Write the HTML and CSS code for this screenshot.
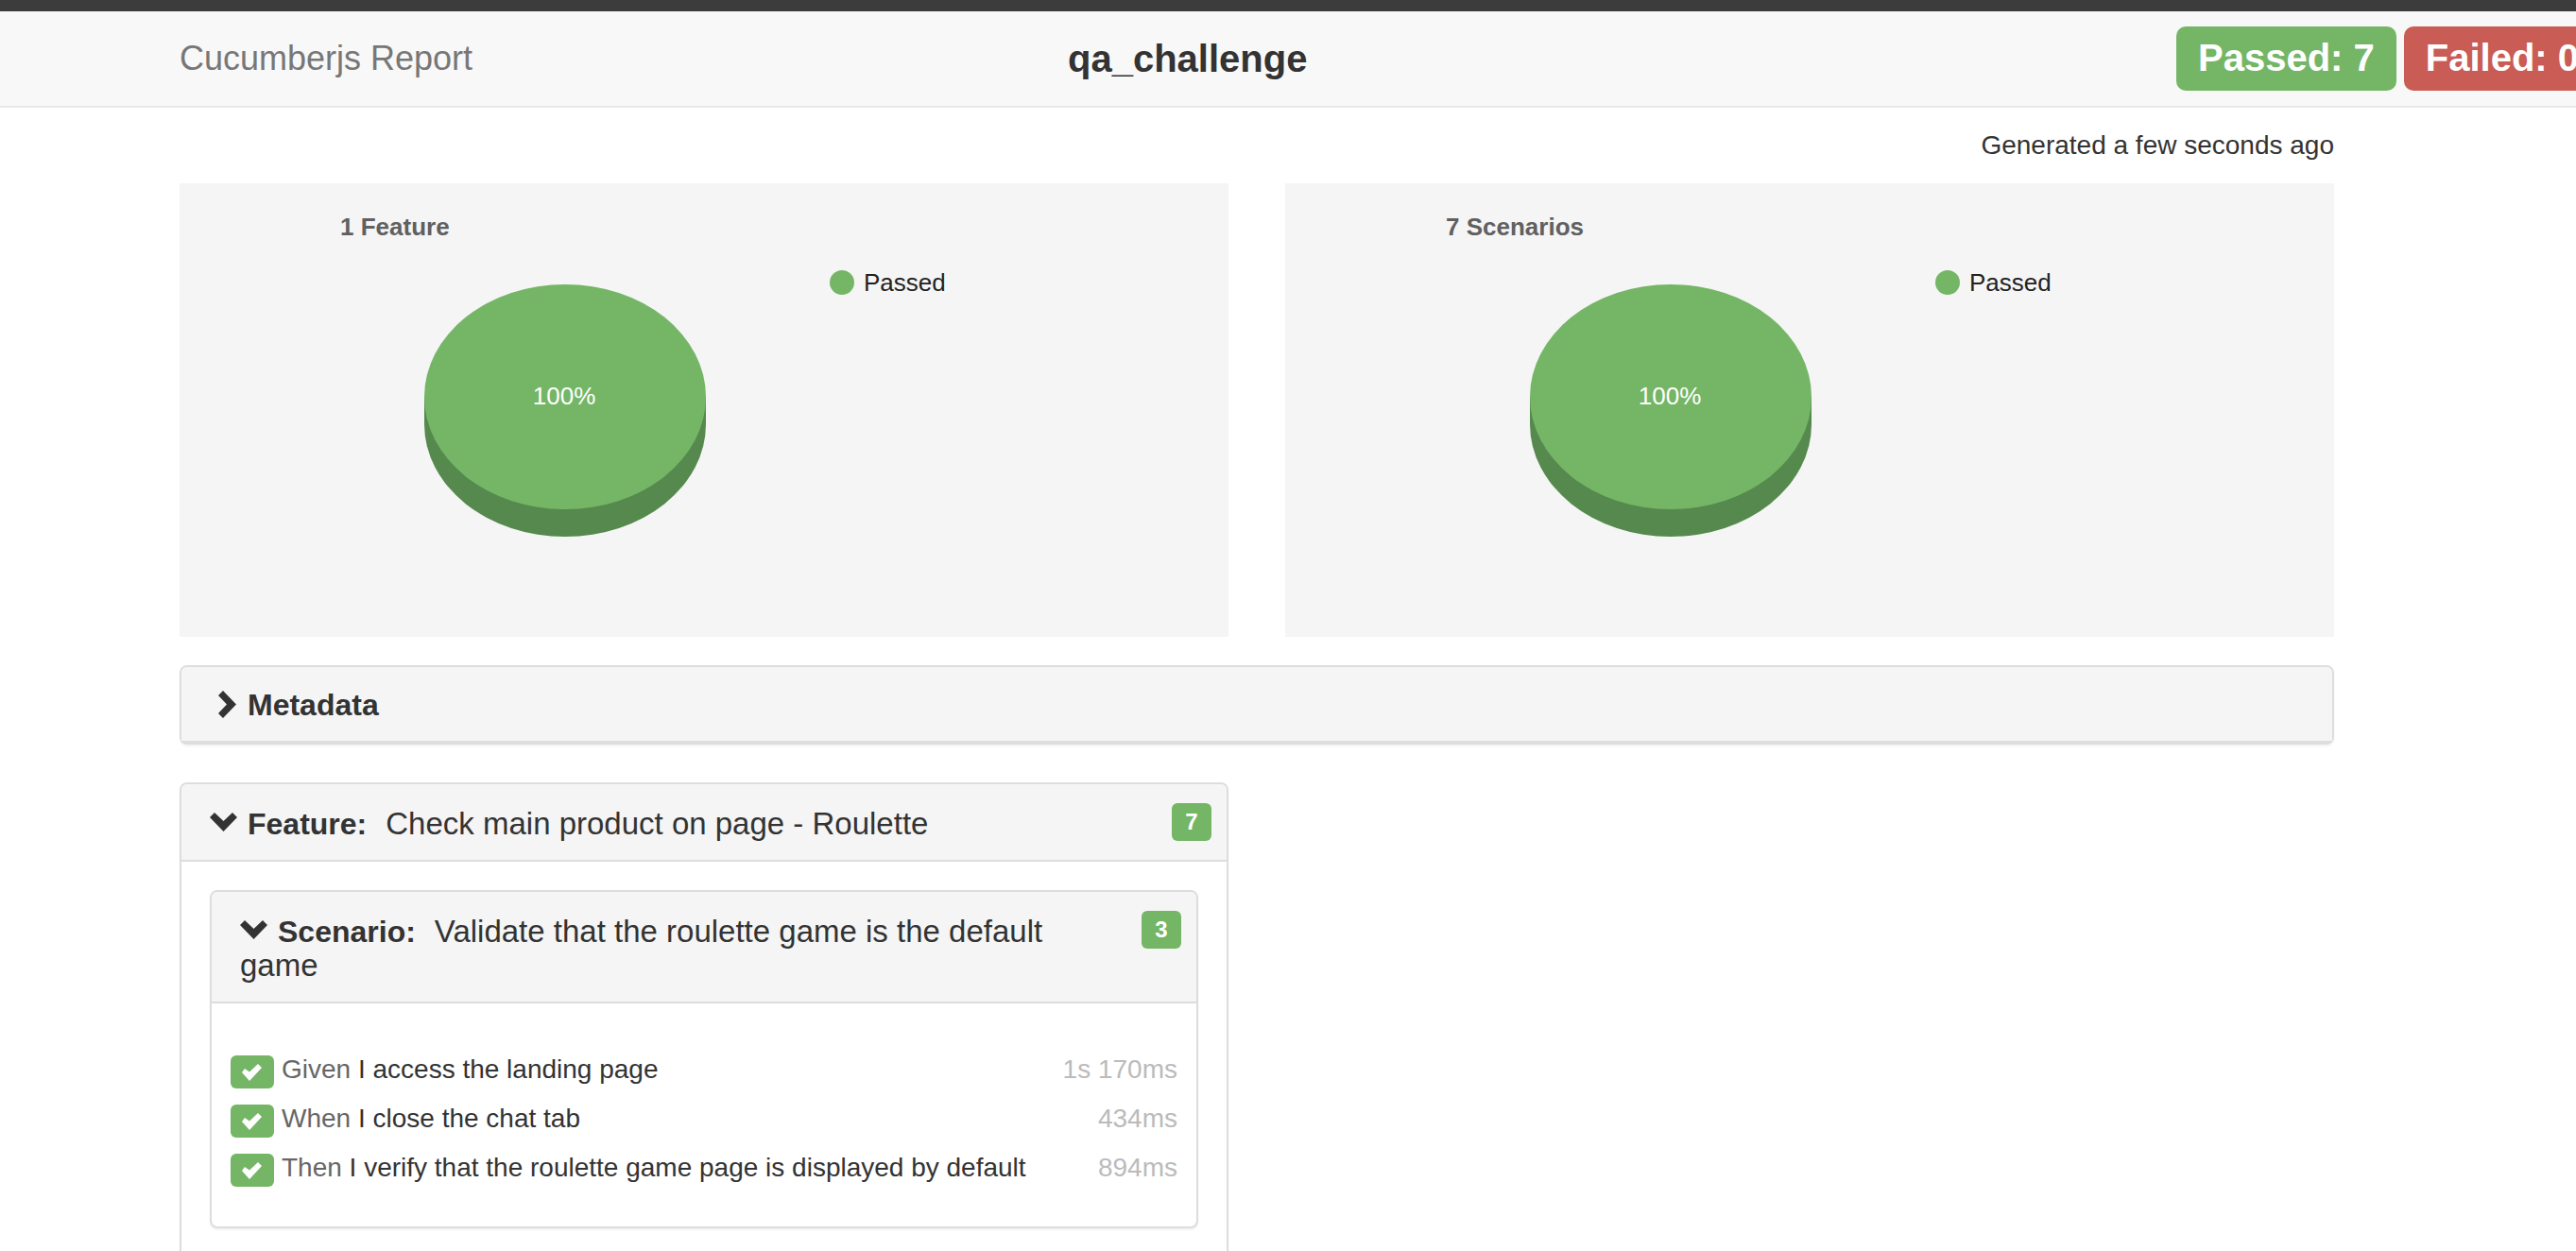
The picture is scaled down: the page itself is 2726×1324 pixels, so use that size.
FILE: index.html
```html
<!DOCTYPE html>
<html lang="en">
<head>
<meta charset="utf-8">
<title>Cucumberjs Report</title>
<link rel="stylesheet" href="styles.css">
</head>
<body>
<header class="navbar">
  <a class="brand" href="#">Cucumberjs Report</a>
  <h1 class="project">qa_challenge</h1>
  <div class="totals">
    <span class="total passed">Passed: 7</span>
    <span class="total failed">Failed: 0</span>
  </div>
</header>
<main class="container">
  <p class="generated">Generated a few seconds ago</p>
  <div class="columns charts">
    <svg class="chart" role="img" aria-label="1 Feature, 100% passed">
      <text class="chart-title" x="170" y="55">1 Feature</text>
      <path class="pie-side" d="M259 226v29a149 119 0 0 0 298 0v-29z"/>
      <ellipse class="pie-top" cx="408" cy="226" rx="149" ry="119"/>
      <text class="pie-value" x="407" y="234">100%</text>
      <circle class="pie-top" cx="701" cy="105" r="13"/>
      <text class="legend" x="724" y="114">Passed</text>
    </svg>
    <svg class="chart" role="img" aria-label="7 Scenarios, 100% passed">
      <text class="chart-title" x="170" y="55">7 Scenarios</text>
      <path class="pie-side" d="M259 226v29a149 119 0 0 0 298 0v-29z"/>
      <ellipse class="pie-top" cx="408" cy="226" rx="149" ry="119"/>
      <text class="pie-value" x="407" y="234">100%</text>
      <circle class="pie-top" cx="701" cy="105" r="13"/>
      <text class="legend" x="724" y="114">Passed</text>
    </svg>
  </div>

  <section class="panel metadata">
    <h2 class="panel-heading">
      <button class="toggle" type="button" aria-expanded="false"><svg class="chevron" viewBox="0 0 32 30" aria-hidden="true"><path d="M14 1 28 15.500 14 30 9 25 18 15.500 9 6z"/></svg><b>Metadata</b></button>
    </h2>
  </section>

  <div class="columns">
    <section class="panel">
      <h2 class="panel-heading">
        <button class="toggle" type="button" aria-expanded="true"><svg class="chevron" viewBox="0 0 32 30" aria-hidden="true"><path d="M0 9 5 4 14.500 13 24 4 29 9 14.500 24z"/></svg><b>Feature:</b><span class="name">Check main product on page - Roulette</span></button>
        <span class="badge">7</span>
      </h2>
      <div class="feature-body">
        <section class="panel">
          <h3 class="panel-heading">
            <button class="toggle" type="button" aria-expanded="true"><svg class="chevron" viewBox="0 0 32 30" aria-hidden="true"><path d="M0 9 5 4 14.500 13 24 4 29 9 14.500 24z"/></svg><b>Scenario:</b><span class="name">Validate that the roulette game is the default game</span></button>
            <span class="badge">3</span>
          </h3>
          <ul class="steps">
            <li class="step">
              <span class="status"><svg class="check" viewBox="0 0 22 18" aria-hidden="true"><path d="M0 9 3 5 8 8.500 17 0 21 4 8 18z"/></svg></span>
              <span class="text"><span class="keyword">Given</span> I access the landing page</span>
              <span class="duration">1s 170ms</span>
            </li>
            <li class="step">
              <span class="status"><svg class="check" viewBox="0 0 22 18" aria-hidden="true"><path d="M0 9 3 5 8 8.500 17 0 21 4 8 18z"/></svg></span>
              <span class="text"><span class="keyword">When</span> I close the chat tab</span>
              <span class="duration">434ms</span>
            </li>
            <li class="step">
              <span class="status"><svg class="check" viewBox="0 0 22 18" aria-hidden="true"><path d="M0 9 3 5 8 8.500 17 0 21 4 8 18z"/></svg></span>
              <span class="text"><span class="keyword">Then</span> I verify that the roulette game page is displayed by default</span>
              <span class="duration">894ms</span>
            </li>
          </ul>
        </section>
      </div>
    </section>
  </div>
</main>
</body>
</html>
```

FILE: styles.css
```css
* { box-sizing: border-box; }

body {
  margin: 0;
  height: 100vh;
  overflow: hidden;
  background: #fff;
  color: #333;
  font: 28px/40px "Liberation Sans", Arial, sans-serif;
}

h1, h2, h3, p, ul { margin: 0; padding: 0; }

.navbar {
  display: grid;
  grid-template-columns: 940fr 1173fr 423px;
  align-items: center;
  padding-left: 190px;
  overflow: hidden;
  background: #f8f8f8;
  border-top: 12px solid #3d3c3c;
  border-bottom: 2px solid #e7e7e7;
}

.brand { color: #777; font-size: 36px; text-decoration: none; }
.project { font-size: 40px; line-height: 40px; }

.totals { display: flex; gap: 8px; padding: 16px 0; }

.total {
  flex: none;
  padding: 13px 23px 15px;
  border-radius: 10px;
  color: #fff;
  font-size: 40px;
  font-weight: bold;
}

.passed { background: #74b666; }
.failed { background: #c95c54; }

.container { padding: 20px 256px 0 190px; }

.generated { padding: 0 0 20px; text-align: right; }

.columns {
  display: grid;
  grid-template-columns: 1fr 1fr;
  gap: 60px;
}

.charts { margin-bottom: 30px; }

.chart {
  display: block;
  width: 100%;
  height: 480px;
  background: #f5f5f5;
  font-size: 26px;
}

.chart-title { fill: #606060; font-weight: bold; }
.pie-top { fill: #74b666; }
.pie-side { fill: #56894d; }
.pie-value { fill: #fff; text-anchor: middle; }
.legend { fill: #222; }

.panel {
  border: 2px solid #ddd;
  border-radius: 8px;
  background: #fff;
  box-shadow: 0 2px 2px rgba(0, 0, 0, 0.05);
}

.metadata { margin-bottom: 40px; }

.panel-heading {
  display: flex;
  align-items: flex-start;
  gap: 16px;
  padding: 20px 16px 20px 30px;
  border-bottom: 2px solid #ddd;
  border-radius: 6px 6px 0 0;
  background: #f5f5f5;
  font-size: 32px;
  font-weight: normal;
  line-height: 36px;
}

.toggle {
  flex: 1;
  padding: 4px 0 0;
  border: 0;
  background: none;
  color: inherit;
  font: inherit;
  text-align: left;
  cursor: pointer;
}

.metadata .toggle { padding-top: 2px; }

.chevron {
  width: 32px;
  height: 30px;
  margin-right: 8px;
  vertical-align: -3px;
  fill: #333;
}

.name { margin-left: 20px; font-size: 33px; }

.badge {
  min-width: 42px;
  border-radius: 6px;
  background: #74b666;
  color: #fff;
  font-size: 24px;
  font-weight: bold;
  line-height: 40px;
  text-align: center;
}

.feature-body { padding: 30px 30px 60px; }

.steps { padding: 50px 20px 30px; list-style: none; }

.step {
  display: flex;
  align-items: flex-start;
  gap: 8px;
  padding-bottom: 12px;
}

.status {
  display: flex;
  align-items: center;
  justify-content: center;
  width: 46px;
  height: 35px;
  margin-top: 5px;
  border-radius: 6px;
  background: #74b666;
}

.check { width: 22px; height: 18px; fill: #fff; }
.text { flex: 1; }
.keyword { color: #666; }
.duration { color: #bbb; }
```
